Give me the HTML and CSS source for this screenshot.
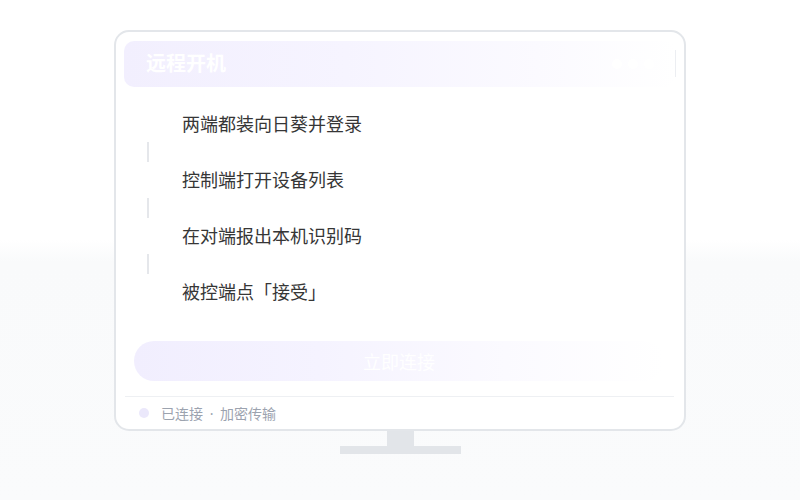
FILE: index.html
```html
<!DOCTYPE html>
<html lang="zh-CN">
<head>
<meta charset="utf-8">
<title>远程开机</title>
<link rel="stylesheet" href="styles.css">
</head>
<body>
<div class="scene">
  <div class="monitor">
    <div class="header">
      <span class="title">远程开机</span>
      <div class="dots"><i></i><i></i><i></i></div>
      <span class="edge"></span>
    </div>
    <div class="steps">
      <div class="step">两端都装向日葵并登录</div>
      <div class="connector"></div>
      <div class="step">控制端打开设备列表</div>
      <div class="connector"></div>
      <div class="step">在对端报出本机识别码</div>
      <div class="connector"></div>
      <div class="step">被控端点「接受」</div>
    </div>
    <div class="button">立即连接</div>
    <div class="divider"></div>
    <div class="footer">
      <span class="status-dot"></span>
      <span class="status-text">已连接 · 加密传输</span>
    </div>
  </div>
  <div class="neck"></div>
  <div class="base"></div>
</div>
</body>
</html>
```

FILE: styles.css
```css
* { box-sizing: border-box; }
html, body { margin: 0; padding: 0; }
body {
  width: 800px;
  height: 500px;
  overflow: hidden;
  font-family: "Noto Sans", "Noto Sans CJK SC", sans-serif;
  background: linear-gradient(to bottom, #ffffff 0, #ffffff 240px, #f9fafb 262px, #fafbfc 500px);
}
.scene {
  padding-top: 30px;
  display: flex;
  flex-direction: column;
  align-items: center;
}
.monitor {
  width: 572px;
  height: 401px;
  border: 2px solid #e3e6ea;
  border-radius: 15px;
  background: #ffffff;
  padding: 9px 8px 0;
  display: flex;
  flex-direction: column;
}
.header {
  position: relative;
  height: 46px;
  border-radius: 10px;
  background: linear-gradient(90deg, #f2effe 0%, #f6f4ff 40%, #fbfaff 75%, #ffffff 100%);
  display: flex;
  align-items: center;
  padding-left: 22px;
}
.title {
  color: #ffffff;
  font-size: 20px;
  font-weight: 700;
  line-height: 1;
}
.dots {
  margin-left: auto;
  margin-right: 22px;
  display: flex;
  gap: 6px;
}
.dots i {
  width: 10px;
  height: 10px;
  border-radius: 50%;
  background: #ffffff;
}
.edge {
  position: absolute;
  right: 0;
  top: 9px;
  width: 1px;
  height: 27px;
  background: #eceef2;
}
.steps {
  margin-top: 19px;
  margin-bottom: 1px;
  display: flex;
  flex-direction: column;
}
.step {
  height: 36px;
  display: flex;
  align-items: center;
  padding-left: 58px;
  padding-bottom: 3px;
  font-size: 18px;
  color: #363636;
}
.connector {
  margin-left: 23px;
  width: 2px;
  height: 20px;
  background: #e5e7eb;
}
.button {
  margin: 30px 12px 0 10px;
  height: 40px;
  border-radius: 20px;
  background: linear-gradient(90deg, #f1eefe 0%, #f5f3ff 35%, #fbfaff 70%, #ffffff 100%);
  color: #ffffff;
  font-size: 18px;
  display: flex;
  align-items: center;
  justify-content: center;
}
.divider {
  margin: 15px 2px 0 1px;
  height: 1px;
  background: #eef0f3;
}
.footer {
  flex: 1;
  display: flex;
  align-items: center;
  padding-left: 15px;
  gap: 12px;
}
.status-dot {
  width: 10px;
  height: 10px;
  border-radius: 50%;
  background: #ebe8fb;
}
.status-text {
  font-size: 14px;
  color: #9ca3af;
  word-spacing: 3px;
}
.neck {
  width: 27px;
  height: 15px;
  background: #e2e5e9;
}
.base {
  width: 121px;
  height: 8px;
  background: #e2e5e9;
}
```
